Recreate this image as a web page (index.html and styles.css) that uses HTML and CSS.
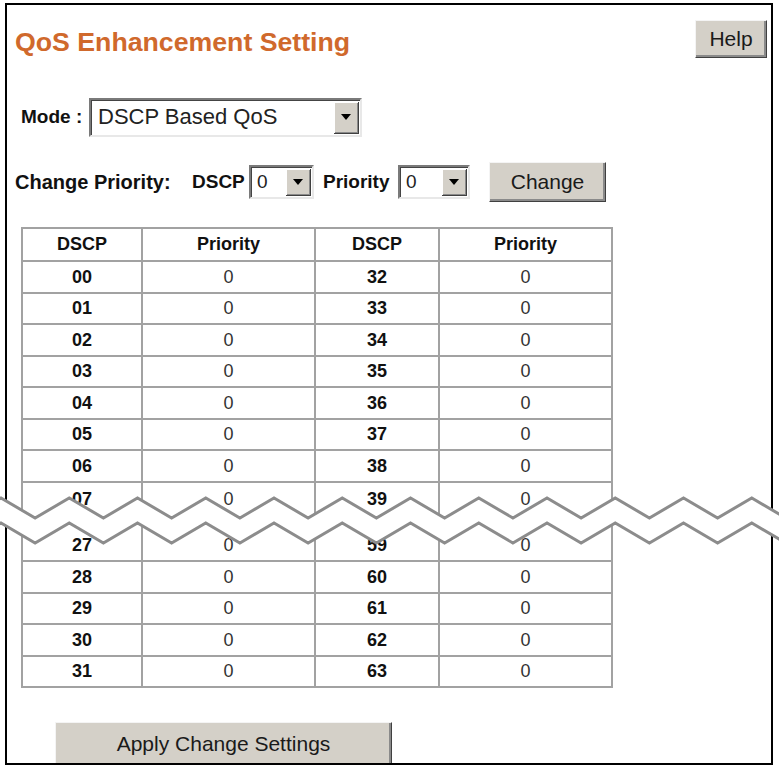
FILE: index.html
```html
<!DOCTYPE html>
<html>
<head>
<meta charset="utf-8">
<title>QoS Enhancement Setting</title>
<link rel="stylesheet" href="styles.css">
</head>
<body>
<div class="frame">
  <div class="top">
    <h1 class="title">QoS Enhancement Setting</h1>
    <div class="btn help">Help</div>
  </div>
  <div class="mode-row">
    <span class="label mode-label">Mode :</span>
    <div class="select mode-sel"><span class="val">DSCP Based QoS</span><span class="arrow"><i></i></span></div>
  </div>
  <div class="change-row">
    <span class="label cp-label">Change Priority:</span>
    <span class="label dscp-label">DSCP</span>
    <div class="select sel-dscp"><span class="val">0</span><span class="arrow"><i></i></span></div>
    <span class="label pri-label">Priority</span>
    <div class="select sel-pri"><span class="val">0</span><span class="arrow"><i></i></span></div>
    <div class="btn change">Change</div>
  </div>
  <table class="grid">
    <colgroup><col class="c1"><col class="c2"><col class="c3"><col class="c4"></colgroup>
    <tr class="head"><th>DSCP</th><th>Priority</th><th>DSCP</th><th>Priority</th></tr>
    <tr class="r32"><td class="b">00</td><td>0</td><td class="b">32</td><td>0</td></tr>
    <tr class="r31"><td class="b">01</td><td>0</td><td class="b">33</td><td>0</td></tr>
    <tr class="r32"><td class="b">02</td><td>0</td><td class="b">34</td><td>0</td></tr>
    <tr class="r31"><td class="b">03</td><td>0</td><td class="b">35</td><td>0</td></tr>
    <tr class="r32"><td class="b">04</td><td>0</td><td class="b">36</td><td>0</td></tr>
    <tr class="r31"><td class="b">05</td><td>0</td><td class="b">37</td><td>0</td></tr>
    <tr class="r32"><td class="b">06</td><td>0</td><td class="b">38</td><td>0</td></tr>
    <tr class="r32 open"><td class="b">07</td><td>0</td><td class="b">39</td><td>0</td></tr>
    <tr class="gap open"><td></td><td></td><td></td><td></td></tr>
    <tr class="r31"><td class="b">27</td><td>0</td><td class="b">59</td><td>0</td></tr>
    <tr class="r32"><td class="b">28</td><td>0</td><td class="b">60</td><td>0</td></tr>
    <tr class="r31"><td class="b">29</td><td>0</td><td class="b">61</td><td>0</td></tr>
    <tr class="r32"><td class="b">30</td><td>0</td><td class="b">62</td><td>0</td></tr>
    <tr class="r31"><td class="b">31</td><td>0</td><td class="b">63</td><td>0</td></tr>
  </table>
  <div class="btn apply">Apply Change Settings</div>
</div>
<svg class="break" width="779" height="62" viewBox="0 0 779 62">
  <polygon class="band" points="-33.1,28 1,8 35.1,28 69.25,8 103.4,28 137.5,8 171.6,28 205.75,8 239.9,28 274,8 308.1,28 342.25,8 376.4,28 410.5,8 444.6,28 478.75,8 512.9,28 547,8 581.1,28 615.25,8 649.4,28 683.5,8 717.6,28 751.75,8 785.9,28 820,8 820,33 785.9,53 751.75,33 717.6,53 683.5,33 649.4,53 615.25,33 581.1,53 547,33 512.9,53 478.75,33 444.6,53 410.5,33 376.4,53 342.25,33 308.1,53 274,33 239.9,53 205.75,33 171.6,53 137.5,33 103.4,53 69.25,33 35.1,53 1,33 -33.1,53"/>
  <polyline class="zz" points="-33.1,28 1,8 35.1,28 69.25,8 103.4,28 137.5,8 171.6,28 205.75,8 239.9,28 274,8 308.1,28 342.25,8 376.4,28 410.5,8 444.6,28 478.75,8 512.9,28 547,8 581.1,28 615.25,8 649.4,28 683.5,8 717.6,28 751.75,8 785.9,28 820,8"/>
  <polyline class="zz" points="-33.1,53 1,33 35.1,53 69.25,33 103.4,53 137.5,33 171.6,53 205.75,33 239.9,53 274,33 308.1,53 342.25,33 376.4,53 410.5,33 444.6,53 478.75,33 512.9,53 547,33 581.1,53 615.25,33 649.4,53 683.5,33 717.6,53 751.75,33 785.9,53 820,33"/>
</svg>
</body>
</html>
```

FILE: styles.css
```css
html, body {
  margin: 0;
  padding: 0;
  background: #fff;
}
body {
  position: relative;
  width: 779px;
  height: 770px;
  overflow: hidden;
  font-family: "Liberation Sans", Arial, sans-serif;
  color: #111;
}
.frame {
  margin: 3px 0 0 5px;
  width: 768px;
  height: 762px;
  box-sizing: border-box;
  border: 2px solid #000;
  overflow: hidden;
}
.top {
  display: flex;
  justify-content: space-between;
  align-items: flex-start;
  padding: 15px 4px 0 8px;
}
.title {
  margin: 7px 0 0 0;
  font-size: 26.7px;
  line-height: 30px;
  font-weight: bold;
  color: #d0692c;
}
.btn {
  box-sizing: border-box;
  display: flex;
  align-items: center;
  justify-content: center;
  background: #d4d0c8;
  border: 1px solid;
  border-color: #f4f4f4 #404040 #404040 #f4f4f4;
  box-shadow: inset -2px -2px #8a8a8a;
  font-size: 21px;
  color: #1a1a1a;
}
.help {
  width: 72px;
  height: 38px;
}
.label {
  font-weight: bold;
  font-size: 19px;
  color: #111;
}
.mode-row {
  display: flex;
  align-items: center;
  margin-top: 40px;
  padding-left: 14px;
  height: 38px;
}
.mode-label {
  width: 68px;
}
.select {
  display: flex;
  box-sizing: border-box;
  background: #fff;
  border: 2px solid;
  border-color: #7a7a7a #e8e8e8 #e8e8e8 #7a7a7a;
  box-shadow: inset 1px 1px #444;
}
.select .val {
  flex: 1;
  display: flex;
  align-items: center;
  padding-left: 7px;
  font-size: 22px;
  color: #222;
}
.select .arrow {
  width: 25px;
  margin: 2px 1px 1px 0;
  box-sizing: border-box;
  background: #d4d0c8;
  border-right: 1px solid #404040;
  border-bottom: 1px solid #404040;
  box-shadow: inset 1px 1px #fff, inset -1px -1px #8a8a8a;
  display: flex;
  align-items: center;
  justify-content: center;
}
.select .arrow i {
  display: block;
  width: 0;
  height: 0;
  border-left: 5px solid transparent;
  border-right: 5px solid transparent;
  border-top: 6px solid #000;
}
.mode-sel {
  width: 273px;
  height: 39px;
}
.change-row {
  display: flex;
  align-items: center;
  margin-top: 26px;
  padding-left: 8px;
  height: 40px;
}
.cp-label {
  width: 177px;
  font-size: 20px;
}
.dscp-label {
  width: 57px;
}
.sel-dscp {
  width: 65px;
  height: 34px;
}
.sel-dscp .val, .sel-pri .val {
  font-size: 19px;
  padding-left: 6px;
}
.pri-label {
  margin-left: 9px;
  width: 75px;
}
.sel-pri {
  width: 72px;
  height: 34px;
}
.change {
  margin-left: 19px;
  width: 117px;
  height: 40px;
}
.grid {
  margin: 25px 0 0 14px;
  border-collapse: separate;
  border-spacing: 0;
  table-layout: fixed;
  width: 592px;
  border-top: 2px solid #a2a2a2;
  border-left: 2px solid #a2a2a2;
}
.c1 { width: 120px; }
.c2 { width: 173px; }
.c3 { width: 124px; }
.c4 { width: 173px; }
.grid th, .grid td {
  box-sizing: border-box;
  padding: 0;
  text-align: center;
  vertical-align: middle;
  border-right: 2px solid #a2a2a2;
  border-bottom: 2px solid #a2a2a2;
  font-size: 18px;
  color: #1a1a1a;
}
.grid th {
  font-weight: bold;
  height: 33px;
  color: #111;
}
.grid td {
  font-weight: normal;
  color: #333;
}
.grid td.b {
  font-weight: bold;
  color: #111;
}
.grid tr.r32 td { height: 32px; }
.grid tr.r31 td { height: 31px; }
.grid tr.gap td { height: 16px; }
.grid tr.open td { border-bottom: none; }
.apply {
  margin: 34px 0 0 48px;
  width: 337px;
  height: 46px;
  align-items: flex-start;
  padding-top: 9px;
}
.break {
  position: absolute;
  left: 0;
  top: 490px;
}
.break .band {
  fill: #fff;
  stroke: none;
}
.break .zz {
  fill: none;
  stroke: #8c8c8c;
  stroke-width: 3;
  stroke-linejoin: miter;
}
```
